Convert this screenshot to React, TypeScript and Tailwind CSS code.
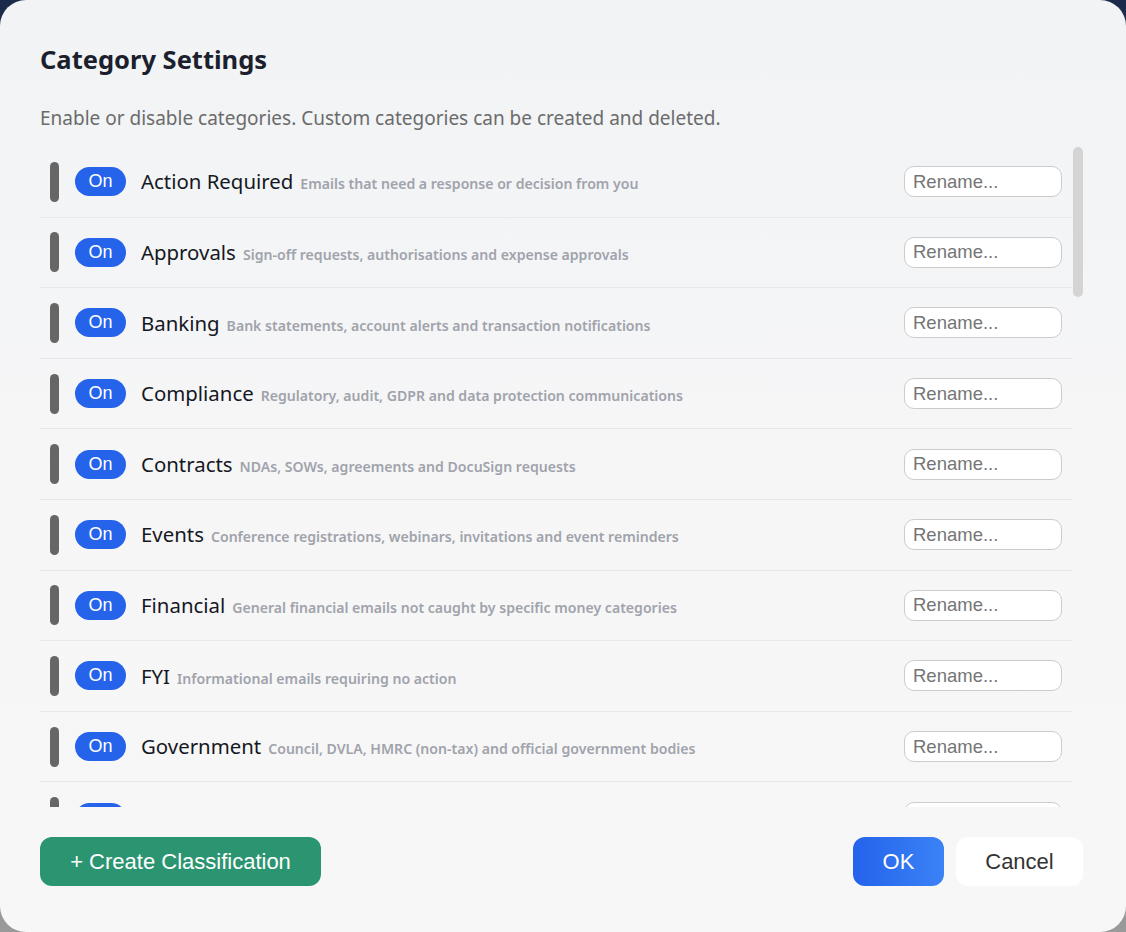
import React from "react";

const rows: [string, string][] = [
  ["Action Required", "Emails that need a response or decision from you"],
  ["Approvals", "Sign-off requests, authorisations and expense approvals"],
  ["Banking", "Bank statements, account alerts and transaction notifications"],
  ["Compliance", "Regulatory, audit, GDPR and data protection communications"],
  ["Contracts", "NDAs, SOWs, agreements and DocuSign requests"],
  ["Events", "Conference registrations, webinars, invitations and event reminders"],
  ["Financial", "General financial emails not caught by specific money categories"],
  ["FYI", "Informational emails requiring no action"],
  ["Government", "Council, DVLA, HMRC (non-tax) and official government bodies"],
  ["Health", "Medical appointments, prescriptions and health services"],
];

const seg = { fontFamily: '"Noto Sans", "Open Sans", sans-serif' };
const arial = { fontFamily: '"Liberation Sans", Arial, sans-serif' };

export default function App() {
  return (
    <div className="w-[1126px] h-[932px] bg-gradient-to-b from-[#1b2a4a] via-[#5b6270] to-[#9a9a9a] overflow-hidden">
      <div className="w-full h-full rounded-[26px] bg-[#f6f6f7] bg-gradient-to-b from-[#f1f3f5] via-[#f6f6f7] to-[#f7f7f7] flex flex-col">
        <div className="px-10 pt-[42px]">
          <h1 className="text-[25.5px] font-bold text-[#1c1f2e] leading-[34px]" style={seg}>
            Category Settings
          </h1>
          <p className="mt-[29px] text-[19px] text-[#6b6b6b] leading-[26px]" style={seg}>
            Enable or disable categories. Custom categories can be created and deleted.
          </p>
        </div>
        <div className="mt-[16px] ml-10 mr-[40px] h-[660px] flex">
          <div className="flex-1 overflow-hidden">
            {rows.map(([name, desc]) => (
              <div
                key={name}
                className="h-[70.6px] border-b border-[#e8e8ea] flex items-center pl-[10px] pr-[10px]"
              >
                <div className="w-[9px] h-[40px] rounded-full bg-[#666666] shrink-0" />
                <div
                  className="ml-[16px] w-[51px] h-[29px] rounded-full bg-[#2563eb] text-white text-[18px] flex items-center justify-center shrink-0"
                  style={arial}
                >
                  On
                </div>
                <div className="ml-[15px] flex-1 flex items-baseline whitespace-nowrap overflow-hidden" style={seg}>
                  <span className="text-[20.4px] text-[#16181f]">{name}</span>
                  <span className="ml-[7px] text-[14.1px] font-semibold text-[#a0a3ab]">{desc}</span>
                </div>
                <input
                  placeholder="Rename..."
                  className="w-[158px] h-[31px] rounded-[10px] border border-[#cccccc] bg-white px-[8px] text-[18.5px] placeholder:text-[#757575] outline-none shrink-0"
                  style={arial}
                />
              </div>
            ))}
          </div>
          <div className="w-[14px] pl-[1px] pt-0">
            <div className="w-[10px] h-[150px] rounded-full bg-[#d4d4d4]" />
          </div>
        </div>
        <div className="mt-[30px] pl-10 pr-[43px] flex items-center">
          <button
            className="w-[281px] h-[49px] rounded-[12px] bg-[#2b9470] text-white text-[22px]"
            style={arial}
          >
            + Create Classification
          </button>
          <div className="ml-auto flex gap-[12px]">
            <button
              className="w-[91px] h-[49px] rounded-[12px] bg-gradient-to-r from-[#2563eb] to-[#3b82f6] text-white text-[22px]"
              style={arial}
            >
              OK
            </button>
            <button
              className="w-[127px] h-[49px] rounded-[12px] bg-white text-[#333333] text-[22px]"
              style={arial}
            >
              Cancel
            </button>
          </div>
        </div>
      </div>
    </div>
  );
}
